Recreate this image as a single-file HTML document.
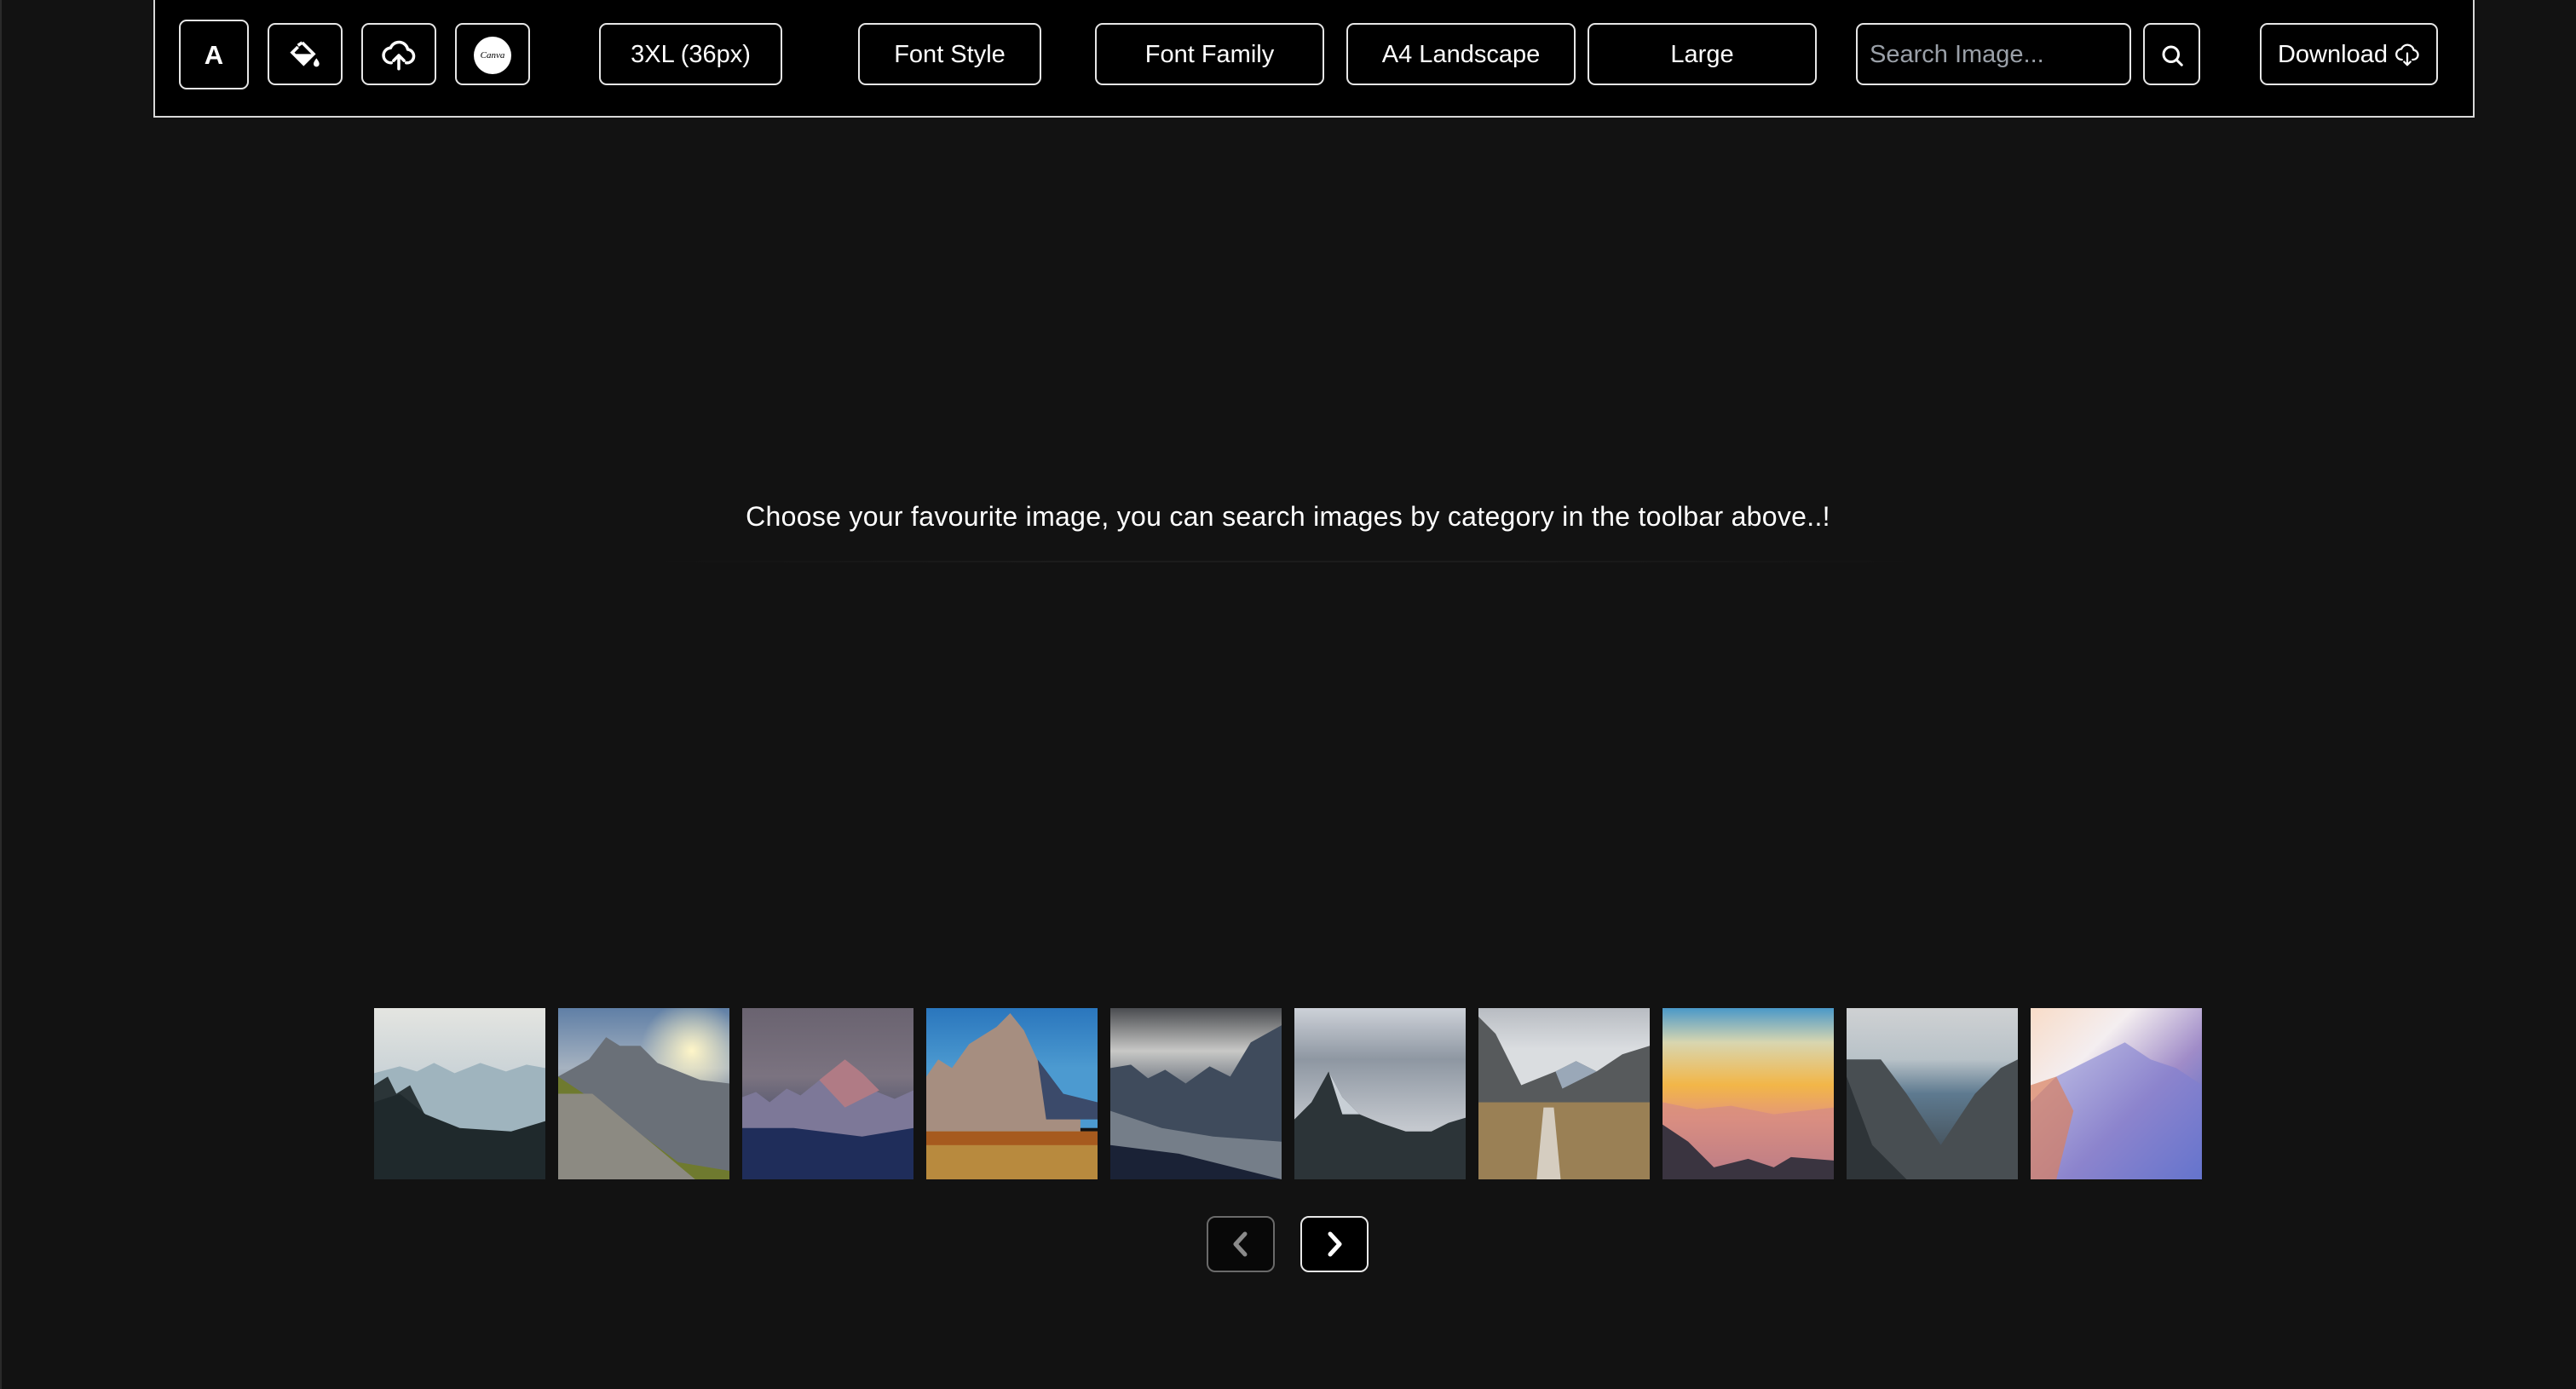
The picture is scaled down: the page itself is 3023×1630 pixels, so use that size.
<!DOCTYPE html>
<html><head><meta charset="utf-8"><style>
*{box-sizing:border-box;margin:0;padding:0}
html,body{width:3023px;height:1630px;background:#121212;overflow:hidden;font-family:"Liberation Sans",Arial,sans-serif;color:#fff}
body{position:relative}
.edge{position:absolute;left:0;top:0;width:2px;height:1630px;background:#2a2a2a}
.bar{position:absolute;left:180px;top:-2px;width:2724px;height:140px;background:#000;border:2px solid #d8d8d8}
.b{position:absolute;border:2px solid #e6e6e6;border-radius:9px;background:#000;display:flex;align-items:center;justify-content:center;font-size:29px;color:#fff;top:27px;height:73px;padding-top:2px}
.t{position:absolute;top:588px;left:0;width:3023px;text-align:center;font-size:32px;letter-spacing:.3px}
.line{position:absolute;top:658px;left:752px;width:1513px;height:2px;background:linear-gradient(90deg,transparent,#1c1c1c,#1c1c1c,transparent)}
.im{position:absolute;top:1183px;width:201px;height:201px;overflow:hidden}
.im svg{width:201px;height:201px;display:block}
.nav{position:absolute;top:1427px;width:80px;height:66px;border-radius:10px;display:flex;align-items:center;justify-content:center}
</style></head><body>
<div class="edge"></div>
<div class="bar"></div>
<div class="b" style="left:210px;top:23px;width:82px;height:82px;font-size:31px;font-weight:bold">A</div>
<div class="b" style="left:314px;width:88px"><svg width="40" height="40" viewBox="0 0 24 24"><path d="M10 3l8 8-7 7-8-8 4-4M7 5l3-2" fill="none" stroke="#fff" stroke-width="2.2"/><path d="M4 11h13l-6 6z" fill="#fff"/><path d="M20 14c1.5 2 2 3 2 4a2 2 0 01-4 0c0-1 .5-2 2-4z" fill="#fff"/></svg></div>
<div class="b" style="left:424px;width:88px"><svg width="42" height="42" viewBox="0 0 24 24" fill="none" stroke="#fff" stroke-width="2" stroke-linecap="round" stroke-linejoin="round"><path d="M7 17a5 5 0 01-.5-10A6 6 0 0118 8a4.5 4.5 0 01-1 9"/><path d="M12 21v-9M8.5 15.5L12 12l3.5 3.5"/></svg></div>
<div class="b" style="left:534px;width:88px"><div style="width:44px;height:44px;border-radius:50%;background:#fff;color:#000;font:italic 11px 'Liberation Serif',serif;display:flex;align-items:center;justify-content:center">Canva</div></div>
<div class="b" style="left:703px;width:215px">3XL (36px)</div>
<div class="b" style="left:1007px;width:215px">Font Style</div>
<div class="b" style="left:1285px;width:269px">Font Family</div>
<div class="b" style="left:1580px;width:269px">A4 Landscape</div>
<div class="b" style="left:1863px;width:269px">Large</div>
<div class="b" style="left:2178px;width:323px;justify-content:flex-start;padding-left:14px;color:#9aa0a8">Search Image...</div>
<div class="b" style="left:2515px;width:67px"><svg width="30" height="30" viewBox="0 0 24 24" fill="none" stroke="#fff" stroke-width="2.4" stroke-linecap="round"><circle cx="11" cy="11" r="7"/><path d="M16 16l5 5"/></svg></div>
<div class="b" style="left:2652px;width:209px">Download&nbsp;<svg width="30" height="30" viewBox="0 0 24 24" fill="none" stroke="#fff" stroke-width="1.8" stroke-linecap="round" stroke-linejoin="round"><path d="M7 16a5 5 0 01-.5-10A6 6 0 0118 7a4.5 4.5 0 01-1 9"/><path d="M12 10v11M9 18l3 3 3-3"/></svg></div>
<div class="t">Choose your favourite image, you can search images by category in the toolbar above..!</div>
<div class="line"></div>

<div class="im" style="left:439px"><svg viewBox="0 0 100 100" preserveAspectRatio="none"><defs><linearGradient id="g1" x1="0" y1="0" x2="0" y2="1"><stop offset="0" stop-color="#e4e5e1"/><stop offset=".4" stop-color="#c9d2d6"/><stop offset="1" stop-color="#8ea3ad"/></linearGradient></defs><rect width="100" height="100" fill="url(#g1)"/><path d="M0 38l15-4 10 3 10-5 12 6 15-6 15 5 12-4 11 2v70H0z" fill="#9fb4be"/><path d="M0 45l8-5 5 10 8-5 10 20 20 8 20 5 30 0v30H0z" fill="#2b3538"/><path d="M0 55L15 50 30 62 50 70 80 72 100 66V100H0z" fill="#1f292c"/></svg></div>
<div class="im" style="left:655px"><svg viewBox="0 0 100 100" preserveAspectRatio="none"><defs><linearGradient id="g2" x1="0" y1="0" x2="0" y2="1"><stop offset="0" stop-color="#5f7fa6"/><stop offset=".35" stop-color="#a6b2c0"/><stop offset="1" stop-color="#3d3f3c"/></linearGradient><radialGradient id="s2" cx=".78" cy=".25" r=".3"><stop offset="0" stop-color="#fff6c8"/><stop offset="1" stop-color="#fff6c8" stop-opacity="0"/></radialGradient></defs><rect width="100" height="100" fill="url(#g2)"/><rect width="100" height="100" fill="url(#s2)"/><path d="M0 40l18-10 10-13 8 5 12 0 10 10 25 10 17 2v60H0z" fill="#6a7078"/><path d="M0 40l30 20 40 30 30 5v5H0z" fill="#6f7a2f"/><path d="M0 50l20 0 30 25 30 25H0z" fill="#8c8a82"/></svg></div>
<div class="im" style="left:871px"><svg viewBox="0 0 100 100" preserveAspectRatio="none"><defs><linearGradient id="g3" x1="0" y1="0" x2="0" y2="1"><stop offset="0" stop-color="#6a6370"/><stop offset=".4" stop-color="#7b7380"/><stop offset="1" stop-color="#182a55"/></linearGradient></defs><rect width="100" height="100" fill="url(#g3)"/><path d="M0 52l8-3 8 6 10-8 8 4 10-8 15-12 10 8 10 10 10 4 11-5v52H0z" fill="#7d7898"/><path d="M45 42l15-12 10 8 10 10-20 10z" fill="#b07b85"/><path d="M0 70l30 0 40 5 30-5v30H0z" fill="#1f2d5a"/></svg></div>
<div class="im" style="left:1087px"><svg viewBox="0 0 100 100" preserveAspectRatio="none"><defs><linearGradient id="g4" x1="0" y1="0" x2="0" y2="1"><stop offset="0" stop-color="#2a76bd"/><stop offset=".5" stop-color="#4c9ad0"/></linearGradient></defs><rect width="100" height="70" fill="url(#g4)"/><path d="M0 40l7-10 8 5 10-14 8-5 8-5 8-8 8 10 10 22 10 15 10 10 3 5v40H0z" fill="#a68e80"/><path d="M65 30l15 20 20 5v10H70z" fill="#3b4a6a"/><rect y="72" width="100" height="28" fill="#b88a3e"/><rect y="72" width="100" height="8" fill="#a65a1e"/></svg></div>
<div class="im" style="left:1303px"><svg viewBox="0 0 100 100" preserveAspectRatio="none"><defs><linearGradient id="g5" x1="0" y1="0" x2="0" y2="1"><stop offset="0" stop-color="#4a4c50"/><stop offset=".25" stop-color="#c8c8c6"/><stop offset=".5" stop-color="#5a6370"/><stop offset="1" stop-color="#1f2738"/></linearGradient></defs><rect width="100" height="100" fill="url(#g5)"/><path d="M0 35l12-2 10 8 10-5 12 8 14-10 12 6 12-20 18-10v90H0z" fill="#3f4b5c"/><path d="M0 60l30 10 30 5 40 3v22H0z" fill="#9aa0a6" opacity=".6"/><path d="M0 80l40 5 60 15H0z" fill="#1a2236"/></svg></div>
<div class="im" style="left:1519px"><svg viewBox="0 0 100 100" preserveAspectRatio="none"><defs><linearGradient id="g6" x1="0" y1="0" x2="0" y2="1"><stop offset="0" stop-color="#cdd1d8"/><stop offset=".3" stop-color="#8e97a2"/><stop offset=".7" stop-color="#c4c8ce"/></linearGradient></defs><rect width="100" height="100" fill="url(#g6)"/><path d="M0 65l10-10 10-18 8 15 10 10 12 5 15 5 15 0 10-5 10-3v36H0z" fill="#2c3438"/><path d="M20 37l8 15 10 10-10 0z" fill="#c8cfd6"/></svg></div>
<div class="im" style="left:1735px"><svg viewBox="0 0 100 100" preserveAspectRatio="none"><defs><linearGradient id="g7" x1="0" y1="0" x2="0" y2="1"><stop offset="0" stop-color="#b8bcc2"/><stop offset=".4" stop-color="#dadde0"/></linearGradient></defs><rect width="100" height="60" fill="url(#g7)"/><path d="M0 5l10 10 15 30 20 -8 12-6 12 6 15-10 16-5v70H0z" fill="#575a5c"/><path d="M45 37l12-6 12 6-20 10z" fill="#9aa8b8"/><rect y="55" width="100" height="45" fill="#9a8055"/><path d="M38 58l6 0 4 42h-14z" fill="#d5cdc0"/></svg></div>
<div class="im" style="left:1951px"><svg viewBox="0 0 100 100" preserveAspectRatio="none"><defs><linearGradient id="g8" x1="0" y1="0" x2="0" y2="1"><stop offset="0" stop-color="#4a98c8"/><stop offset=".2" stop-color="#d8d6b0"/><stop offset=".45" stop-color="#f2b648"/><stop offset=".65" stop-color="#e4967a"/><stop offset=".9" stop-color="#9a6a86"/></linearGradient></defs><rect width="100" height="100" fill="url(#g8)"/><path d="M0 55l20 4 20-2 25 5 35-4v42H0z" fill="#d48a84" opacity=".7"/><path d="M0 68l15 10 15 15 20-5 15 5 10-6 25 2v11H0z" fill="#3a3440"/></svg></div>
<div class="im" style="left:2167px"><svg viewBox="0 0 100 100" preserveAspectRatio="none"><defs><linearGradient id="g9" x1="0" y1="0" x2="0" y2="1"><stop offset="0" stop-color="#cfd1d3"/><stop offset=".3" stop-color="#b8c2c8"/><stop offset=".5" stop-color="#5e7a90"/><stop offset="1" stop-color="#3a3f42"/></linearGradient></defs><rect width="100" height="100" fill="url(#g9)"/><path d="M0 30l20 0 15 20 20 30 20-30 15-15 10-5v70H0z" fill="#484e52"/><path d="M0 40l15 40 20 20H0z" fill="#2e3438"/></svg></div>
<div class="im" style="left:2383px"><svg viewBox="0 0 100 100" preserveAspectRatio="none"><defs><linearGradient id="g10" x1="0" y1="0" x2="1" y2="1"><stop offset="0" stop-color="#f8dcc8"/><stop offset=".3" stop-color="#f4eef0"/><stop offset=".6" stop-color="#a08cc8"/><stop offset="1" stop-color="#3e64c8"/></linearGradient></defs><rect width="100" height="100" fill="url(#g10)"/><path d="M0 55l15-15 20-10 20-10 15 10 15 5 15 10v55H0z" fill="#7e7ed0" opacity=".6"/><path d="M0 45l15-5 10 20-10 40H0z" fill="#d88060" opacity=".7"/></svg></div>

<div class="nav" style="left:1416px;background:#080808;border:2px solid #6a6a6a"><svg width="26" height="34" viewBox="0 0 26 34"><path d="M18 5L7 17l11 12" fill="none" stroke="#8a8a8a" stroke-width="5" stroke-linecap="round" stroke-linejoin="round"/></svg></div>
<div class="nav" style="left:1526px;background:#000;border:2px solid #e8e8e8"><svg width="26" height="34" viewBox="0 0 26 34"><path d="M8 5l11 12-11 12" fill="none" stroke="#fff" stroke-width="5" stroke-linecap="round" stroke-linejoin="round"/></svg></div>
</body></html>
